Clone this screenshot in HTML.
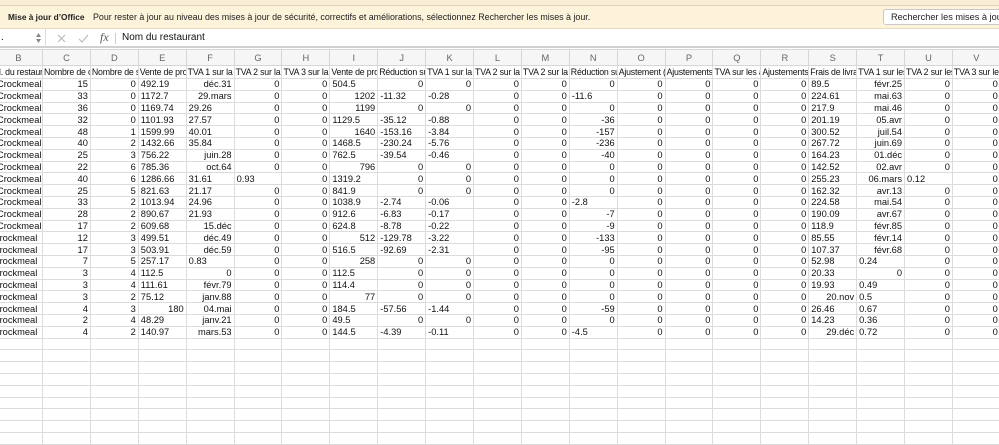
<!DOCTYPE html>
<html><head><meta charset="utf-8">
<style>
*{margin:0;padding:0;box-sizing:border-box}
body{width:999px;height:429px;overflow:hidden;background:#fff;font-family:"Liberation Sans",sans-serif;position:relative}
#top{position:absolute;left:0;top:0;width:999px;height:6px;background:#f7eed5;border-bottom:1px solid #ddd3b8}
#ban{position:absolute;left:0;top:6px;width:999px;height:23px;background:#fcf3da;border-bottom:1px solid #e6dcc0;font-size:8.9px;color:#222;line-height:23px;white-space:nowrap}
#ban b{position:absolute;left:8px;font-weight:bold;font-size:8.3px}
#ban span{position:absolute;left:93px}
#btn{position:absolute;left:883px;top:3px;width:130px;height:16px;background:#fff;border:1px solid #c9c9c9;border-radius:3px;line-height:14px;padding-left:7px;font-size:9.2px;white-space:nowrap}
#fb{position:absolute;left:0;top:29px;width:999px;height:19px;background:#fff;border-bottom:2px solid #d0d0d0}
#nb{position:absolute;left:0;top:0;width:46px;height:18px;border-right:1px solid #ddd}
#fx{position:absolute;left:100px;top:1px;font-family:"Liberation Serif",serif;font-style:italic;font-size:12px;color:#555}
#sep{position:absolute;left:115px;top:4px;height:11px;border-left:1px solid #ccc}
#ft{position:absolute;left:122px;top:3px;font-size:10px;color:#111}
table{position:absolute;left:-6px;top:49px;border-collapse:collapse;table-layout:fixed;width:1006px;font-size:9.3px;color:#111}
td{border:1px solid #dcdcdc;overflow:hidden;white-space:nowrap;text-align:right;padding:0 2px;line-height:10px;height:11.8px}
td.l{text-align:left}
tr.h td{height:16px;background:#f6f6f6;color:#666;text-align:center;border-color:#d6d6d6}
tr.n td{height:13px;text-align:left;padding:0 1px;font-size:8.8px;letter-spacing:-0.2px}
</style></head><body>
<div id="top"></div>
<div id="ban"><b>Mise à jour d’Office</b><span>Pour rester à jour au niveau des mises à jour de sécurité, correctifs et améliorations, sélectionnez Rechercher les mises à jour.</span><div id="btn">Rechercher les mises à jour</div></div>
<div id="fb"><div id="nb"><span style="position:absolute;left:1px;top:3px;font-size:10px">.</span><svg style="position:absolute;left:35px;top:3px" width="7" height="12"><path d="M1 5 L3.5 1 L6 5Z M1 7 L3.5 11 L6 7Z" fill="#888"/></svg></div>
<svg style="position:absolute;left:57px;top:5px" width="9" height="9"><path d="M1 1L8 8M8 1L1 8" stroke="#bbb" stroke-width="1.2"/></svg>
<svg style="position:absolute;left:78px;top:5px" width="11" height="9"><path d="M1 5L4 8L10 1" stroke="#bbb" stroke-width="1.2" fill="none"/></svg>
<span id="fx">fx</span><div id="sep"></div><span id="ft">Nom du restaurant</span></div>
<table>
<colgroup><col style="width:48px"><col span="20" style="width:47.9px"></colgroup>
<tr class="h"><td>B</td><td>C</td><td>D</td><td>E</td><td>F</td><td>G</td><td>H</td><td>I</td><td>J</td><td>K</td><td>L</td><td>M</td><td>N</td><td>O</td><td>P</td><td>Q</td><td>R</td><td>S</td><td>T</td><td>U</td><td>V</td></tr>
<tr class="n"><td>d. du restaurant</td><td>Nombre de commandes</td><td>Nombre de s</td><td>Vente de produits</td><td>TVA 1 sur la vente</td><td>TVA 2 sur la vente</td><td>TVA 3 sur la vente</td><td>Vente de produits</td><td>Réduction sur</td><td>TVA 1 sur la</td><td>TVA 2 sur la</td><td>TVA 2 sur la</td><td>Réduction sur</td><td>Ajustement (</td><td>Ajustements</td><td>TVA sur les a</td><td>Ajustements</td><td>Frais de livraison</td><td>TVA 1 sur les</td><td>TVA 2 sur les</td><td>TVA 3 sur les</td></tr>
<tr><td class="l">Crockmeal</td><td>15</td><td>0</td><td class="l">492.19</td><td>déc.31</td><td>0</td><td>0</td><td class="l">504.5</td><td>0</td><td>0</td><td>0</td><td>0</td><td>0</td><td>0</td><td>0</td><td>0</td><td>0</td><td class="l">89.5</td><td>févr.25</td><td>0</td><td>0</td></tr>
<tr><td class="l">Crockmeal</td><td>33</td><td>0</td><td class="l">1172.7</td><td>29.mars</td><td>0</td><td>0</td><td>1202</td><td class="l">-11.32</td><td class="l">-0.28</td><td>0</td><td>0</td><td class="l">-11.6</td><td>0</td><td>0</td><td>0</td><td>0</td><td class="l">224.61</td><td>mai.63</td><td>0</td><td>0</td></tr>
<tr><td class="l">Crockmeal</td><td>36</td><td>0</td><td class="l">1169.74</td><td class="l">29.26</td><td>0</td><td>0</td><td>1199</td><td>0</td><td>0</td><td>0</td><td>0</td><td>0</td><td>0</td><td>0</td><td>0</td><td>0</td><td class="l">217.9</td><td>mai.46</td><td>0</td><td>0</td></tr>
<tr><td class="l">Crockmeal</td><td>32</td><td>0</td><td class="l">1101.93</td><td class="l">27.57</td><td>0</td><td>0</td><td class="l">1129.5</td><td class="l">-35.12</td><td class="l">-0.88</td><td>0</td><td>0</td><td>-36</td><td>0</td><td>0</td><td>0</td><td>0</td><td class="l">201.19</td><td>05.avr</td><td>0</td><td>0</td></tr>
<tr><td class="l">Crockmeal</td><td>48</td><td>1</td><td class="l">1599.99</td><td class="l">40.01</td><td>0</td><td>0</td><td>1640</td><td class="l">-153.16</td><td class="l">-3.84</td><td>0</td><td>0</td><td>-157</td><td>0</td><td>0</td><td>0</td><td>0</td><td class="l">300.52</td><td>juil.54</td><td>0</td><td>0</td></tr>
<tr><td class="l">Crockmeal</td><td>40</td><td>2</td><td class="l">1432.66</td><td class="l">35.84</td><td>0</td><td>0</td><td class="l">1468.5</td><td class="l">-230.24</td><td class="l">-5.76</td><td>0</td><td>0</td><td>-236</td><td>0</td><td>0</td><td>0</td><td>0</td><td class="l">267.72</td><td>juin.69</td><td>0</td><td>0</td></tr>
<tr><td class="l">Crockmeal</td><td>25</td><td>3</td><td class="l">756.22</td><td>juin.28</td><td>0</td><td>0</td><td class="l">762.5</td><td class="l">-39.54</td><td class="l">-0.46</td><td>0</td><td>0</td><td>-40</td><td>0</td><td>0</td><td>0</td><td>0</td><td class="l">164.23</td><td>01.déc</td><td>0</td><td>0</td></tr>
<tr><td class="l">Crockmeal</td><td>22</td><td>6</td><td class="l">785.36</td><td>oct.64</td><td>0</td><td>0</td><td>796</td><td>0</td><td>0</td><td>0</td><td>0</td><td>0</td><td>0</td><td>0</td><td>0</td><td>0</td><td class="l">142.52</td><td>02.avr</td><td>0</td><td>0</td></tr>
<tr><td class="l">Crockmeal</td><td>40</td><td>6</td><td class="l">1286.66</td><td class="l">31.61</td><td class="l">0.93</td><td>0</td><td class="l">1319.2</td><td>0</td><td>0</td><td>0</td><td>0</td><td>0</td><td>0</td><td>0</td><td>0</td><td>0</td><td class="l">255.23</td><td>06.mars</td><td class="l">0.12</td><td>0</td></tr>
<tr><td class="l">Crockmeal</td><td>25</td><td>5</td><td class="l">821.63</td><td class="l">21.17</td><td>0</td><td>0</td><td class="l">841.9</td><td>0</td><td>0</td><td>0</td><td>0</td><td>0</td><td>0</td><td>0</td><td>0</td><td>0</td><td class="l">162.32</td><td>avr.13</td><td>0</td><td>0</td></tr>
<tr><td class="l">Crockmeal</td><td>33</td><td>2</td><td class="l">1013.94</td><td class="l">24.96</td><td>0</td><td>0</td><td class="l">1038.9</td><td class="l">-2.74</td><td class="l">-0.06</td><td>0</td><td>0</td><td class="l">-2.8</td><td>0</td><td>0</td><td>0</td><td>0</td><td class="l">224.58</td><td>mai.54</td><td>0</td><td>0</td></tr>
<tr><td class="l">Crockmeal</td><td>28</td><td>2</td><td class="l">890.67</td><td class="l">21.93</td><td>0</td><td>0</td><td class="l">912.6</td><td class="l">-6.83</td><td class="l">-0.17</td><td>0</td><td>0</td><td>-7</td><td>0</td><td>0</td><td>0</td><td>0</td><td class="l">190.09</td><td>avr.67</td><td>0</td><td>0</td></tr>
<tr><td class="l">Crockmeal</td><td>17</td><td>2</td><td class="l">609.68</td><td>15.déc</td><td>0</td><td>0</td><td class="l">624.8</td><td class="l">-8.78</td><td class="l">-0.22</td><td>0</td><td>0</td><td>-9</td><td>0</td><td>0</td><td>0</td><td>0</td><td class="l">118.9</td><td>févr.85</td><td>0</td><td>0</td></tr>
<tr><td class="l">&nbsp;rockmeal</td><td>12</td><td>3</td><td class="l">499.51</td><td>déc.49</td><td>0</td><td>0</td><td>512</td><td class="l">-129.78</td><td class="l">-3.22</td><td>0</td><td>0</td><td>-133</td><td>0</td><td>0</td><td>0</td><td>0</td><td class="l">85.55</td><td>févr.14</td><td>0</td><td>0</td></tr>
<tr><td class="l">&nbsp;rockmeal</td><td>17</td><td>3</td><td class="l">503.91</td><td>déc.59</td><td>0</td><td>0</td><td class="l">516.5</td><td class="l">-92.69</td><td class="l">-2.31</td><td>0</td><td>0</td><td>-95</td><td>0</td><td>0</td><td>0</td><td>0</td><td class="l">107.37</td><td>févr.68</td><td>0</td><td>0</td></tr>
<tr><td class="l">&nbsp;rockmeal</td><td>7</td><td>5</td><td class="l">257.17</td><td class="l">0.83</td><td>0</td><td>0</td><td>258</td><td>0</td><td>0</td><td>0</td><td>0</td><td>0</td><td>0</td><td>0</td><td>0</td><td>0</td><td class="l">52.98</td><td class="l">0.24</td><td>0</td><td>0</td></tr>
<tr><td class="l">&nbsp;rockmeal</td><td>3</td><td>4</td><td class="l">112.5</td><td>0</td><td>0</td><td>0</td><td class="l">112.5</td><td>0</td><td>0</td><td>0</td><td>0</td><td>0</td><td>0</td><td>0</td><td>0</td><td>0</td><td class="l">20.33</td><td>0</td><td>0</td><td>0</td></tr>
<tr><td class="l">&nbsp;rockmeal</td><td>3</td><td>4</td><td class="l">111.61</td><td>févr.79</td><td>0</td><td>0</td><td class="l">114.4</td><td>0</td><td>0</td><td>0</td><td>0</td><td>0</td><td>0</td><td>0</td><td>0</td><td>0</td><td class="l">19.93</td><td class="l">0.49</td><td>0</td><td>0</td></tr>
<tr><td class="l">&nbsp;rockmeal</td><td>3</td><td>2</td><td class="l">75.12</td><td>janv.88</td><td>0</td><td>0</td><td>77</td><td>0</td><td>0</td><td>0</td><td>0</td><td>0</td><td>0</td><td>0</td><td>0</td><td>0</td><td>20.nov</td><td class="l">0.5</td><td>0</td><td>0</td></tr>
<tr><td class="l">&nbsp;rockmeal</td><td>4</td><td>3</td><td>180</td><td>04.mai</td><td>0</td><td>0</td><td class="l">184.5</td><td class="l">-57.56</td><td class="l">-1.44</td><td>0</td><td>0</td><td>-59</td><td>0</td><td>0</td><td>0</td><td>0</td><td class="l">26.46</td><td class="l">0.67</td><td>0</td><td>0</td></tr>
<tr><td class="l">&nbsp;rockmeal</td><td>2</td><td>4</td><td class="l">48.29</td><td>janv.21</td><td>0</td><td>0</td><td class="l">49.5</td><td>0</td><td>0</td><td>0</td><td>0</td><td>0</td><td>0</td><td>0</td><td>0</td><td>0</td><td class="l">14.23</td><td class="l">0.36</td><td>0</td><td>0</td></tr>
<tr><td class="l">&nbsp;rockmeal</td><td>4</td><td>2</td><td class="l">140.97</td><td>mars.53</td><td>0</td><td>0</td><td class="l">144.5</td><td class="l">-4.39</td><td class="l">-0.11</td><td>0</td><td>0</td><td class="l">-4.5</td><td>0</td><td>0</td><td>0</td><td>0</td><td>29.déc</td><td class="l">0.72</td><td>0</td><td>0</td></tr>
<tr><td></td><td></td><td></td><td></td><td></td><td></td><td></td><td></td><td></td><td></td><td></td><td></td><td></td><td></td><td></td><td></td><td></td><td></td><td></td><td></td><td></td></tr>
<tr><td></td><td></td><td></td><td></td><td></td><td></td><td></td><td></td><td></td><td></td><td></td><td></td><td></td><td></td><td></td><td></td><td></td><td></td><td></td><td></td><td></td></tr>
<tr><td></td><td></td><td></td><td></td><td></td><td></td><td></td><td></td><td></td><td></td><td></td><td></td><td></td><td></td><td></td><td></td><td></td><td></td><td></td><td></td><td></td></tr>
<tr><td></td><td></td><td></td><td></td><td></td><td></td><td></td><td></td><td></td><td></td><td></td><td></td><td></td><td></td><td></td><td></td><td></td><td></td><td></td><td></td><td></td></tr>
<tr><td></td><td></td><td></td><td></td><td></td><td></td><td></td><td></td><td></td><td></td><td></td><td></td><td></td><td></td><td></td><td></td><td></td><td></td><td></td><td></td><td></td></tr>
<tr><td></td><td></td><td></td><td></td><td></td><td></td><td></td><td></td><td></td><td></td><td></td><td></td><td></td><td></td><td></td><td></td><td></td><td></td><td></td><td></td><td></td></tr>
<tr><td></td><td></td><td></td><td></td><td></td><td></td><td></td><td></td><td></td><td></td><td></td><td></td><td></td><td></td><td></td><td></td><td></td><td></td><td></td><td></td><td></td></tr>
<tr><td></td><td></td><td></td><td></td><td></td><td></td><td></td><td></td><td></td><td></td><td></td><td></td><td></td><td></td><td></td><td></td><td></td><td></td><td></td><td></td><td></td></tr>
<tr><td></td><td></td><td></td><td></td><td></td><td></td><td></td><td></td><td></td><td></td><td></td><td></td><td></td><td></td><td></td><td></td><td></td><td></td><td></td><td></td><td></td></tr>
</table>
</body></html>
